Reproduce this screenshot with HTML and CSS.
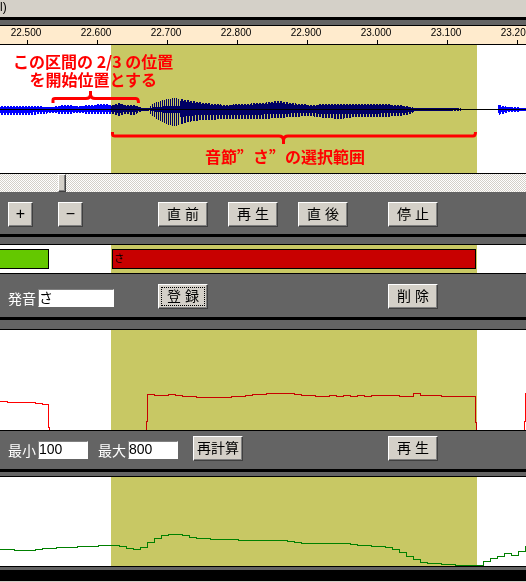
FILE: index.html
```html
<!doctype html>
<html lang="ja">
  <head>
    <meta charset="UTF-8" />
    <meta name="viewport" content="width=device-width, initial-scale=1.0" />
    <title>音節エディタ</title>
    <link rel="stylesheet" href="styles.css">
  </head>
  <body>
    <header class="title-bar">l)</header>

    <main>
      <section class="panel panel-wave">
        <div class="ruler">
          <span class="tick">22.500</span>
          <span class="tick">22.600</span>
          <span class="tick">22.700</span>
          <span class="tick">22.800</span>
          <span class="tick">22.900</span>
          <span class="tick">23.000</span>
          <span class="tick">23.100</span>
          <span class="tick">23.200</span>
        </div>
        <div class="track track-wave">
          <svg class="plot" aria-hidden="true">
            <path id="wave" class="wave" />
          </svg>
          <div class="selection"></div>
          <svg class="plot wave-axis" aria-hidden="true">
            <path d="M0 64.5H2000" />
          </svg>
          <svg class="plot braces" aria-hidden="true">
            <path d="M53 58V55Q53 53.5 55 53.5H86Q90 53.5 90.5 50Q91 53.5 95 53.5H136Q138.5 53.5 138.5 58M90.5 46V51" />
            <path d="M112.5 87V89Q112.5 91 115 91H279Q283 91 283.5 95Q284 91 288 91H473Q475.5 91 475.5 87M283.5 94V99" />
          </svg>
          <p class="note note-start">この区間の 2/3 の位置<br />を開始位置とする</p>
          <p class="note note-range">音節”さ”の選択範囲</p>
        </div>
        <input class="scroll" type="range" min="0" max="518" value="58" aria-label="スクロール" />
        <div class="controls">
          <div class="group group-zoom">
            <button class="small" type="button">+</button>
            <button class="small" type="button">−</button>
          </div>
          <div class="group group-play">
            <button type="button">直 前</button>
            <button type="button">再 生</button>
            <button type="button">直 後</button>
          </div>
          <button type="button">停 止</button>
        </div>
      </section>

      <section class="panel panel-label">
        <div class="track track-label">
          <div class="selection"></div>
          <div class="segment segment-prev"></div>
          <div class="segment segment-current">さ</div>
        </div>
        <div class="controls">
          <div class="group group-fields">
            <div class="field">
              <label for="sound">発音</label>
              <input id="sound" class="wide" type="text" value="さ" />
            </div>
          </div>
          <div class="group group-edit">
            <button class="focused" type="button">登 録</button>
          </div>
          <button type="button">削 除</button>
        </div>
      </section>

      <section class="panel panel-pitch">
        <div class="track track-pitch">
          <svg class="plot pitch" aria-hidden="true">
            <path d="M0 71.5H7V72.5H35V73.5H42V74.5H48.5V97.5H49.5V101" />
            <path d="M146.5 101V91.5H147.5V64.5H154V65.5H168V64.5H175V65.5H182V66.5H196V67.5H231V66.5H245V65.5H252V64.5H266V63.5H294V64.5H301V65.5H315V66.5H329V65.5H336V66.5H343V65.5H350V66.5H357V65.5H364V66.5H371V65.5H399V66.5H413V63.5H420V65.5H441V66.5H475.5V92.5H476.5V101" />
            <path d="M524.5 101V91.5H525.5V63" />
          </svg>
          <div class="selection"></div>
        </div>
        <div class="controls controls-tight">
          <div class="group group-fields">
            <div class="field">
              <label for="min">最小</label>
              <input id="min" type="text" value="100" />
            </div>
            <div class="field">
              <label for="max">最大</label>
              <input id="max" type="text" value="800" />
            </div>
          </div>
          <div class="group group-calc">
            <button type="button">再計算</button>
          </div>
          <button type="button">再 生</button>
        </div>
      </section>

      <section class="panel panel-power">
        <div class="track track-power">
          <div class="selection"></div>
          <svg class="plot power" aria-hidden="true">
            <path d="M0 72.5H14V73.5H35V72.5H42V71.5H56V70.5H77V69.5H98V68.5H119V69.5H126V71.5H133V72.5H140V70.5H147V65.5H154V61.5H161V58.5H168V57.5H182V58.5H189V60.5H196V61.5H210V62.5H238V63.5H287V64.5H294V65.5H301V66.5H350V67.5H357V68.5H371V69.5H385V70.5H392V72.5H399V75.5H406V79.5H413V82.5H420V85.5H427V86.5H441V87.5H455V88.5H483V84.5H490V81.5H497V79.5H504V76.5H511V78.5H518V74.5H525V69" />
          </svg>
        </div>
      </section>
    </main>

    <footer class="status-bar"></footer>
    <script src="wave.js"></script>
  </body>
</html>
```

FILE: styles.css
```css
* {
  box-sizing: border-box;
}
body {
  margin: 0;
  overflow-x: hidden;
  background: #d4d0c8;
  color: #000;
  font: 14px/16px "Liberation Sans", "Noto Sans CJK JP", sans-serif;
}
.title-bar {
  height: 17px;
  font-size: 12px;
  line-height: 14px;
}
.panel {
  border-top: 3px solid #000;
  background: #646464;
}
.panel-wave {
  padding-top: 5px;
}
.panel-label {
  padding-top: 7px;
}
.panel-pitch {
  padding-top: 9px;
}
.panel-power {
  padding: 4px 0 3px;
}

/* time ruler, 70px per 0.1s */
.ruler {
  display: flex;
  height: 19px;
  padding-top: 1px;
  overflow: hidden;
  border-top: 1px solid #000;
  background: repeating-linear-gradient(90deg, #000 0 1px, transparent 1px 70px) 27px 100% / 70px 4px repeat-x #ffebcd;
  font-size: 10px;
  line-height: 12px;
}
.tick {
  flex: 0 0 70px;
  text-align: center;
}
.tick:first-child {
  margin-left: -9px;
}

.track {
  position: relative;
  overflow: hidden;
  border-top: 1px solid #000;
  border-bottom: 1px solid #000;
  background: #fff;
}
.track-wave {
  height: 130px;
}
.track-label {
  display: flex;
  height: 30px;
  padding: 4px 0;
}
.track-pitch {
  height: 102px;
}
.track-power {
  height: 91px;
}
.selection {
  position: absolute;
  top: 0;
  bottom: 0;
  left: 111px;
  width: 366px;
  background: #c8c864;
  mix-blend-mode: multiply;
}
.plot {
  position: absolute;
  top: 0;
  left: 0;
  width: 100%;
  height: 100%;
  fill: none;
  shape-rendering: crispEdges;
}
.wave {
  stroke: #00f;
}
.wave-axis {
  stroke: #000;
}
.pitch {
  stroke: #f00;
}
.power {
  stroke: #008000;
}
.braces {
  stroke: #f00;
  stroke-width: 3px;
  shape-rendering: auto;
}
.note {
  position: absolute;
  margin: 0;
  color: #f00;
  font-size: 16px;
  font-weight: 700;
  font-family: "Noto Sans CJK JP", sans-serif;
  line-height: 18px;
  text-align: center;
  white-space: nowrap;
}
.note-start {
  top: 7px;
  left: 13px;
}
.note-range {
  top: 102px;
  left: 205px;
  font-variant-east-asian: full-width;
}

.scroll {
  display: block;
  width: 100%;
  height: 18px;
  margin: 0;
  appearance: none;
  background: repeating-conic-gradient(#fff 0 25%, #d4d0c8 0 50%) 0 0 / 2px 2px;
}
.scroll::-webkit-slider-thumb {
  width: 8px;
  height: 18px;
  appearance: none;
  border: 1px solid;
  border-color: #fff #404040 #404040 #fff;
  background: #d4d0c8;
  box-shadow: inset -1px -1px #808080;
}

.segment {
  position: relative;
  border: 1px solid #000;
  font-size: 10px;
  line-height: 18px;
}
.segment-prev {
  width: 49px;
  margin-right: 63px;
  border-left: 0;
  background: #64c800;
}
.segment-current {
  width: 364px;
  padding-left: 1px;
  background: #c80000;
}

.controls {
  display: flex;
  align-items: flex-start;
  padding: 10px 8px 7px;
}
.panel-label .controls {
  padding-bottom: 8px;
}
.panel .controls-tight {
  padding-top: 5px;
  padding-bottom: 8px;
}
.group {
  display: flex;
}
.group-zoom {
  gap: 25px;
  margin-right: 75px;
}
.group-play {
  gap: 20px;
  margin-right: 40px;
}
.group-fields {
  gap: 10px;
}
.group-edit {
  margin: 0 180px 0 44px;
}
.group-calc {
  margin: 0 145px 0 15px;
}
.field {
  display: flex;
  margin-top: 5px;
  color: #fff;
}
.field label {
  width: 30px;
  line-height: 20px;
}
.field input {
  width: 50px;
  height: 18px;
  padding: 0 0 2px;
  border: 1px solid;
  border-color: #808080 #fff #fff #808080;
  border-radius: 0;
  background: #fff;
  color: #000;
  font: inherit;
}
.field .wide {
  width: 76px;
}
button {
  width: 50px;
  height: 25px;
  padding: 0 0 2px;
  border: 1px solid;
  border-color: #fff #404040 #404040 #fff;
  border-radius: 0;
  background: #d4d0c8;
  box-shadow: inset -1px -1px #808080;
  color: #000;
  font: inherit;
  white-space: nowrap;
}
.small {
  width: 25px;
  font-size: 16px;
}
.focused {
  outline: 1px dotted #000;
  outline-offset: -4px;
}

.status-bar {
  height: 12px;
  border-bottom: 1px solid #d4d0c8;
  background: #000;
}
```

FILE: wave.js
```js
// envelope points: x, height above the axis, depth below it
const envelope = [
  [0, 3, 5], [30, 3, 5], [52, 2, 3], [62, 4, 4], [80, 3, 3], [88, 4, 4],
  [104, 5, 4], [112, 4, 4], [119, 6, 6], [125, 4, 4], [133, 4, 5],
  [139, 2, 2], [142, 1, 1], [148, 1, 1], [152, 5, 6], [160, 8, 11],
  [168, 10, 15], [175, 11, 16], [185, 9, 13], [192, 8, 11], [205, 6, 10],
  [225, 4, 9], [240, 5, 9], [262, 6, 9], [278, 8, 8], [290, 6, 7],
  [310, 4, 6], [325, 5, 8], [340, 5, 9], [355, 5, 7], [380, 5, 7],
  [400, 4, 6], [410, 2, 4], [415, 1, 1], [450, 1, 1], [470, 0, 0],
  [497, 0, 0], [498, 5, 5], [501, 3, 4], [510, 2, 2], [526, 1, 1],
];
const axis = 64;

function levelAt(x) {
  const i = envelope.findIndex((p) => p[0] > x);
  const [x0, up0, down0] = envelope[i - 1];
  const [x1, up1, down1] = envelope[i];
  const t = (x - x0) / (x1 - x0);
  return [up0 + (up1 - up0) * t, down0 + (down1 - down0) * t];
}

let d = "";
for (let x = 0; x < 526; x++) {
  let [up, down] = levelAt(x);
  const sparse = x > 148 && x < 180;
  // thin out every third column, every second one in the onset
  if (sparse ? x % 2 : x % 3 === 0) {
    up *= sparse ? 0.3 : 0.8;
    down *= sparse ? 0.2 : 0.5;
  }
  d += `M${x + 0.5} ${axis - Math.round(up)}V${axis + 1 + Math.round(down)}`;
}
document.getElementById("wave").setAttribute("d", d);
```
